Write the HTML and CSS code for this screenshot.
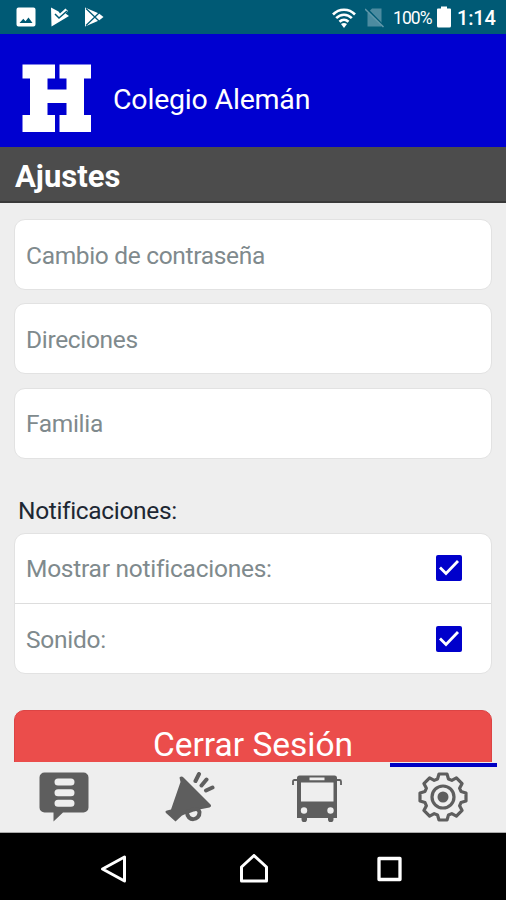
FILE: index.html
```html
<!DOCTYPE html>
<html lang="es">
<head>
  <meta charset="UTF-8" />
  <meta name="viewport" content="width=device-width, initial-scale=1.0"/>
  <title>Colegio Alemán - Ajustes</title>
  <link rel="stylesheet" href="styles.css">
</head>
<body>
  <div class="status-bar">
    <div class="status-left">
      <svg width="20" height="20" viewBox="0 0 20 20">
        <path fill="#fff" fill-rule="evenodd" d="M2.500 0.500h15a2 2 0 0 1 2 2v15a2 2 0 0 1-2 2h-15a2 2 0 0 1-2-2v-15a2 2 0 0 1 2-2zM3.500 16h13l-4-5.500-3 3.700-2.200-2.500z"/>
      </svg>
      <svg width="20" height="20" viewBox="0 0 20 20">
        <path fill="#fff" d="M1 0.500L8.500 4.500 10 6.500 15.500 1.500 18 4 15.500 6.500 19 9 1.500 19.500z"/>
        <path fill="none" stroke="#005a75" stroke-width="1.500" d="M5 7l4 4L17 4"/>
      </svg>
      <svg width="20" height="20" viewBox="0 0 20 20">
        <path fill="#fff" d="M1 0.500L15 6.500 19.500 10 15 13.500 1 19.500z"/>
        <path fill="none" stroke="#005a75" stroke-width="1.300" d="M2 1.500L15 14M2 18.500L15 6"/>
      </svg>
    </div>
    <div class="status-right">
      <svg class="wifi" width="24" height="20" viewBox="0 0 24 20">
        <g fill="none" stroke="#fff" stroke-width="2.600">
          <path d="M1 6.500C7 0.200 17 0.200 23 6.500"/>
          <path d="M4.200 10.200c4.600-4.600 11-4.600 15.600 0"/>
          <path d="M7.500 13.800c2.700-2.600 6.300-2.600 9 0"/>
        </g>
        <path fill="#fff" d="M9 16q3-2 6 0l-3 4z"/>
      </svg>
      <svg class="sim" width="20" height="20" viewBox="0 0 20 20">
        <path fill="#4c8ba0" d="M7 0.500h9.500v18h-14V5z"/>
        <path stroke="#005a75" stroke-width="2" d="M1 0l18 18.500"/>
        <path stroke="#6299ab" stroke-width="1.500" d="M0 1l18.500 18"/>
      </svg>
      <span class="percent">100%</span>
      <svg class="battery" width="14" height="22" viewBox="0 0 14 22">
        <path fill="#fff" d="M4 0.500h6v2h3a1 1 0 0 1 1 1V20a1.500 1.500 0 0 1-1.500 1.500h-11A1.500 1.500 0 0 1 0 20V3.500a1 1 0 0 1 1-1h3z"/>
      </svg>
      <span class="clock">1:14</span>
    </div>
  </div>

  <header class="header">
    <svg class="logo" width="70" height="69" viewBox="0 0 70 69">
      <path fill="#fff" d="M0.500 0.500h32.500v14h-7.500v11h19v-11h-7v-14h31.500v14h-7v36.500h7v17h-31.500v-17h7V39h-19v12h7.500v17H0.500V51H8V14.500H0.500z"/>
    </svg>
    <span class="school">Colegio Alemán</span>
  </header>

  <h1 class="page-title">Ajustes</h1>

  <main class="content">
    <div class="card">Cambio de contraseña</div>
    <div class="card">Direciones</div>
    <div class="card">Familia</div>

    <h2 class="section">Notificaciones:</h2>
    <div class="group">
      <div class="row">
        <span>Mostrar notificaciones:</span>
        <svg class="check" width="26" height="26" viewBox="0 0 26 26">
          <rect width="26" height="26" rx="2" fill="#0000cb"/>
          <path fill="none" stroke="#fff" stroke-width="2.800" d="M4 12.500l6 6L22 6"/>
        </svg>
      </div>
      <div class="row">
        <span>Sonido:</span>
        <svg class="check" width="26" height="26" viewBox="0 0 26 26">
          <rect width="26" height="26" rx="2" fill="#0000cb"/>
          <path fill="none" stroke="#fff" stroke-width="2.800" d="M4 12.500l6 6L22 6"/>
        </svg>
      </div>
    </div>

    <button class="logout">Cerrar Sesión</button>
  </main>

  <nav class="tabs">
    <a class="tab">
      <svg width="50" height="50" viewBox="0 0 50 50">
        <path fill="#5e5e5e" d="M5.500 0.500h39a5 5 0 0 1 5 5v30a5 5 0 0 1-5 5H24L14.500 49.500v-9h-9a5 5 0 0 1-5-5v-30a5 5 0 0 1 5-5z"/>
        <path stroke="#eee" stroke-width="7" stroke-linecap="round" d="M19 10h13M19 20.700h13M19 31.300h13"/>
      </svg>
    </a>
    <a class="tab">
      <svg width="50" height="50" viewBox="0 0 50 50">
        <path fill="#5e5e5e" d="M14.500 5.500q2-2.200 4 0L45.500 32.500q1.500 2-1 3L29 38.500 17 43.500 10.500 49.500 1 41q-1.500-2 1-2.500l4-1L15.500 10z"/>
        <path fill="#eee" stroke="#5e5e5e" stroke-width="4" d="M22 40c0 10 13 9 12.500 0q-1-4-6-2.500z"/>
        <path stroke="#5e5e5e" stroke-width="4" stroke-linecap="round" d="M30.500 9l3.500-7M36.500 13.500l5-6M41 18.500l6.500-3"/>
      </svg>
    </a>
    <a class="tab">
      <svg width="50" height="50" viewBox="0 0 50 50">
        <path fill="#5e5e5e" fill-rule="evenodd" d="M7.500 3.500h35a2.500 2.500 0 0 1 2.500 2.500v40h-40V6a2.500 2.500 0 0 1 2.500-2.500zM17.500 5.500v2.800h15V5.500zM9 10.500v19h32.500v-19z"/>
        <path fill="#5e5e5e" d="M9.500 45h5.500v2.500a2.700 2.700 0 0 1-5.500 0zM36 45h5.500v2.500a2.700 2.700 0 0 1-5.500 0z"/>
        <circle cx="12" cy="38.500" r="3.200" fill="#eee"/>
        <circle cx="38.500" cy="38.500" r="3.200" fill="#eee"/>
        <path fill="none" stroke="#5e5e5e" stroke-width="1.800" d="M5.500 8H2.500q-1.500 0-1.500 1.500V13M44.500 8h3q1.500 0 1.500 1.500V13"/>
      </svg>
    </a>
    <a class="tab active">
      <svg width="50" height="50" viewBox="-25 -25 50 50">
        <g fill="none" stroke="#5e5e5e" stroke-width="3.200" stroke-linejoin="round">
          <path d="M-5.500-18L-4-23H4L5.500-18 8.800-16.600 13.400-19.100 19.100-13.400 16.600-8.800 18-5.500 23-4V4L18 5.500 16.600 8.800 19.100 13.400 13.400 19.100 8.800 16.600 5.500 18 4 23H-4L-5.500 18-8.800 16.600-13.400 19.100-19.100 13.400-16.600 8.800-18 5.500-23 4V-4L-18-5.500-16.600-8.800-19.100-13.400-13.400-19.100-8.800-16.600z"/>
          <circle r="11"/>
        </g>
        <circle r="5.500" fill="#5e5e5e"/>
      </svg>
    </a>
  </nav>

  <div class="nav-bar">
    <svg width="28" height="30" viewBox="0 0 28 30">
      <path fill="none" stroke="#fff" stroke-width="3" stroke-linejoin="round" d="M24.500 3v24L2.500 15z"/>
    </svg>
    <svg width="28" height="30" viewBox="0 0 28 30">
      <path fill="none" stroke="#fff" stroke-width="3" stroke-linejoin="round" d="M1.500 27V13L14 1.500 26.500 13v14z"/>
    </svg>
    <svg width="28" height="30" viewBox="0 0 28 30">
      <rect x="3" y="4.500" width="21" height="21" fill="none" stroke="#fff" stroke-width="3.300" stroke-linejoin="round"/>
    </svg>
  </div>
</body>
</html>
```
FILE: styles.css
```css
* {
  box-sizing: border-box;
}

body {
  margin: 0;
  height: 900px;
  display: flex;
  flex-direction: column;
  overflow: hidden;
  font-family: Roboto, "Liberation Sans", sans-serif;
  background: #eee;
}

svg {
  display: block;
  flex: none;
}

.status-bar {
  height: 34px;
  flex: none;
  display: flex;
  justify-content: space-between;
  align-items: center;
  padding: 0 11px 0 16px;
  background: #005a75;
  color: #fff;
}

.status-left {
  display: flex;
  gap: 14px;
}

.status-right {
  display: flex;
  align-items: center;
}

.wifi {
  margin-top: 1px;
}

.sim {
  margin: 1px 8px 0 9px;
}

.percent {
  width: 40px;
  padding-top: 2px;
  font-size: 17.5px;
  letter-spacing: -0.9px;
  white-space: nowrap;
}

.battery {
  margin: 0 6px 0 4px;
}

.clock {
  width: 38px;
  padding-top: 2px;
  font-size: 20px;
  font-weight: 500;
  letter-spacing: -0.2px;
}

.header {
  height: 113px;
  flex: none;
  display: flex;
  align-items: center;
  padding: 15px 22px 0;
  background: #0000d0;
  color: #fff;
}

.school {
  margin: 3px 0 0 21px;
  font-size: 28.5px;
  letter-spacing: -0.2px;
}

.page-title {
  height: 56px;
  flex: none;
  margin: 0;
  padding: 3px 15px 0;
  border-bottom: 2px solid #393939;
  background: #4c4c4c;
  color: #fff;
  font-size: 31px;
  font-weight: 700;
  line-height: 53px;
}

.content {
  flex: 1;
  overflow: hidden;
  padding: 16px 14px 0;
}

.card {
  height: 71px;
  display: flex;
  align-items: center;
  margin-bottom: 13.3px;
  padding: 1px 11px 0;
  border: 1px solid #e2e2e2;
  border-radius: 11px;
  background: #fff;
  color: #7f8a8d;
  font-size: 24.5px;
  letter-spacing: -0.32px;
}

.section {
  margin: 37px 0 7px 4px;
  color: #1d2733;
  font-size: 24.5px;
  font-weight: 400;
  letter-spacing: -0.34px;
  line-height: 30px;
}

.group {
  height: 141px;
  border: 1px solid #e2e2e2;
  border-radius: 11px;
  background: #fff;
  color: #7f8a8d;
  font-size: 24.5px;
  letter-spacing: -0.25px;
}

.row {
  height: 70px;
  display: flex;
  align-items: center;
  justify-content: space-between;
  padding: 0 29px 0 11px;
}

.row span {
  padding-top: 1px;
}

.row:first-child {
  border-bottom: 1px solid #ddd;
}

.logout {
  display: block;
  width: 100%;
  height: 70px;
  margin-top: 36px;
  padding: 0;
  border: 1px solid #dc4444;
  border-radius: 10px;
  background: #eb4d4b;
  color: #fff;
  font-family: inherit;
  font-size: 33.5px;
}

.tabs {
  height: 71px;
  flex: none;
  display: grid;
  grid-template-columns: repeat(4, 1fr);
  border-bottom: 1px solid #aaa;
  background: #eee;
}

.tab {
  position: relative;
  display: flex;
  justify-content: center;
  padding: 10px 0 0 1px;
}

.tab.active::before {
  content: "";
  position: absolute;
  top: 0.5px;
  left: 10px;
  width: 107px;
  height: 4px;
  background: #0000c4;
}

.nav-bar {
  height: 67px;
  flex: none;
  display: grid;
  grid-template-columns: 28px 28px 28px;
  justify-content: center;
  align-items: center;
  column-gap: 108px;
  padding: 4px 0 0 1px;
  background: #000;
}

.nav-bar svg:first-child {
  margin-left: -4px;
}
```
